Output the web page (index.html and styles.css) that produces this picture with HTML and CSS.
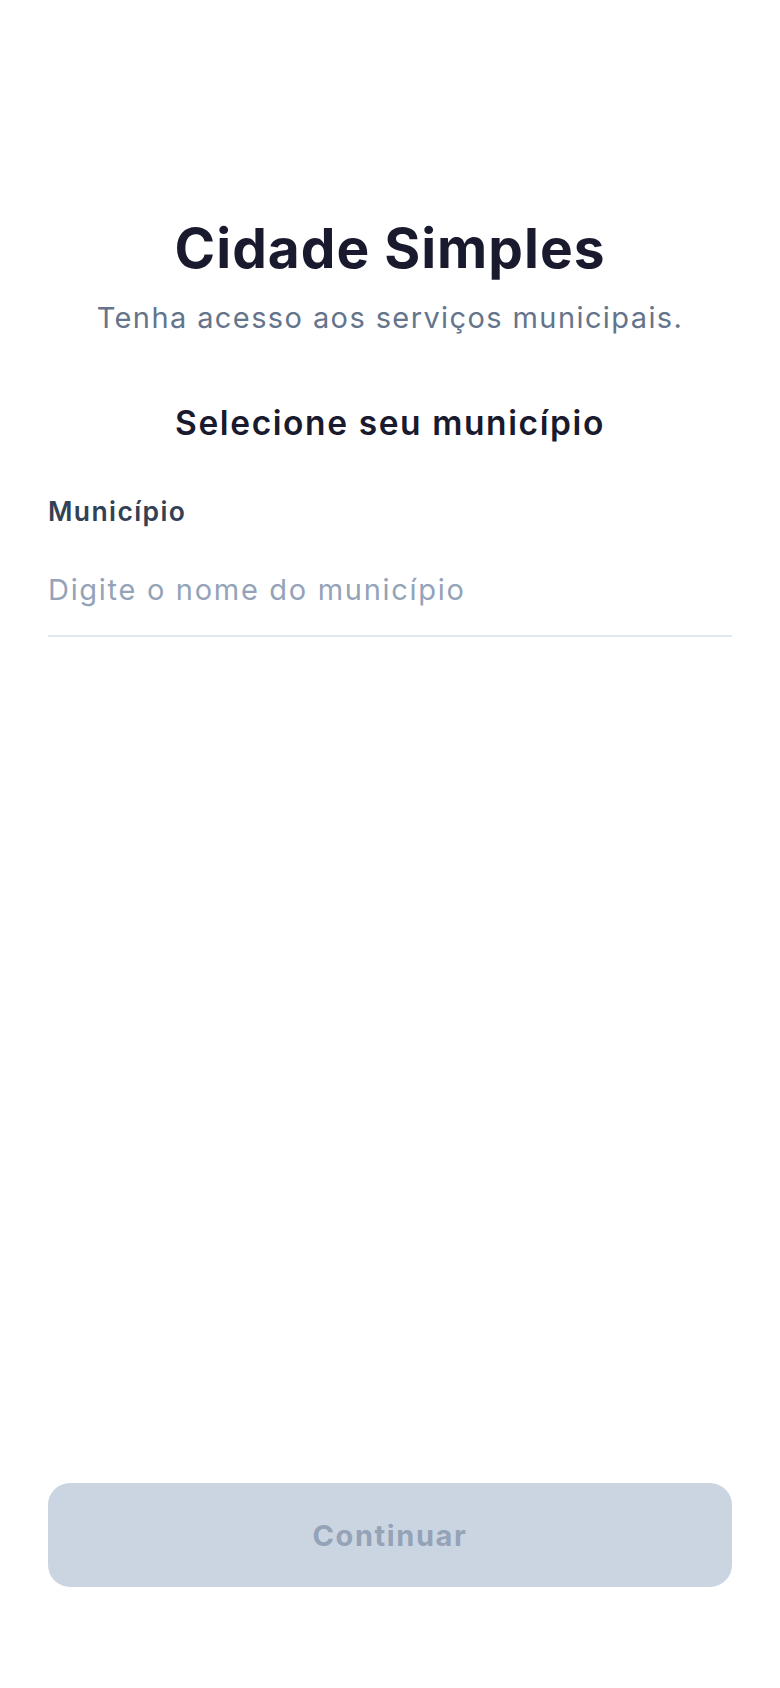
FILE: index.html
```html
<!DOCTYPE html>
<html lang="pt-BR">
<head>
<meta charset="utf-8">
<meta name="viewport" content="width=device-width, initial-scale=1">
<title>Cidade Simples</title>
<link rel="stylesheet" href="styles.css">
</head>
<body>
<main class="screen">
  <header class="brand">
    <h1 class="brand-title">Cidade Simples</h1>
    <p class="brand-subtitle">Tenha acesso aos serviços municipais.</p>
  </header>
  <section class="select">
    <h2 class="select-title">Selecione seu município</h2>
    <div class="field">
      <label class="field-label" for="municipio">Município</label>
      <input class="field-input" id="municipio" type="text" placeholder="Digite o nome do município">
    </div>
  </section>
  <div class="actions">
    <button class="btn-continue" type="button" disabled>Continuar</button>
  </div>
</main>
</body>
</html>
```
FILE: styles.css
```css
* { box-sizing: border-box; }
html, body { margin: 0; padding: 0; background: #ffffff; }
body {
  font-family: Inter, "Noto Sans", "Liberation Sans", sans-serif;
  color: #1a1a2e;
}
.screen {
  min-height: 1688px;
  display: flex;
  flex-direction: column;
  padding: 214px 48px 101px;
}
.brand { text-align: center; }
.brand-title {
  margin: 0;
  font-size: 55px;
  line-height: 68px;
  font-weight: 700;
  color: #1a1a2e;
  letter-spacing: 1px;
}
.brand-subtitle {
  margin: 18px 0 0;
  font-size: 29px;
  line-height: 36px;
  font-weight: 400;
  color: #64748b;
  letter-spacing: 1.4px;
}
.select { margin-top: 66px; }
.select-title {
  margin: 0;
  text-align: center;
  font-size: 33.5px;
  line-height: 42px;
  font-weight: 600;
  color: #1a1a2e;
  letter-spacing: 1.6px;
}
.field {
  margin-top: 51px;
  display: flex;
  flex-direction: column;
}
.field-label {
  font-size: 26.5px;
  line-height: 32px;
  font-weight: 600;
  color: #334155;
  letter-spacing: 1.4px;
}
.field-input {
  margin-top: 28px;
  border: none;
  border-bottom: 2px solid #e2e8f0;
  padding: 16px 0 26px;
  font-family: inherit;
  font-size: 29px;
  line-height: 38px;
  letter-spacing: 1.7px;
  color: #1a1a2e;
  background: transparent;
  outline: none;
  width: 100%;
}
.field-input::placeholder { color: #94a3b8; }
.actions { margin-top: auto; }
.btn-continue {
  display: block;
  width: 100%;
  height: 104px;
  border: none;
  border-radius: 22px;
  background: #cbd5e1;
  color: #94a3b8;
  font-family: inherit;
  font-size: 29px;
  font-weight: 700;
  letter-spacing: 1.6px;
  cursor: default;
}
```
